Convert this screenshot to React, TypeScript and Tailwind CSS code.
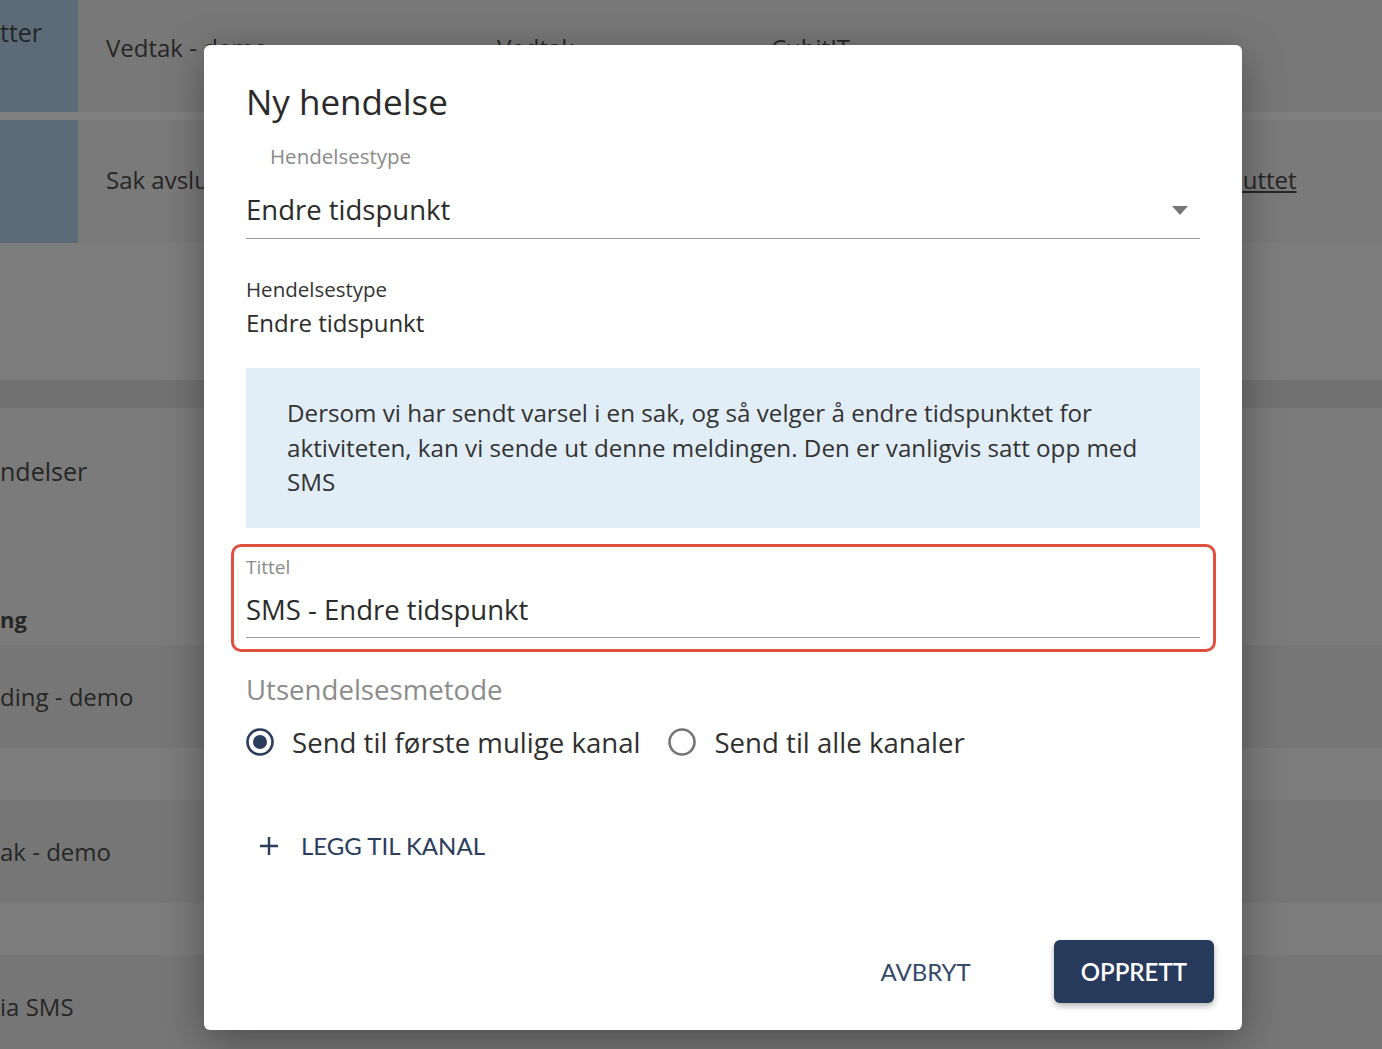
export default function App() {
  const rows = [
    { text: 'ding - demo', dark: true, h: 'h-[103px]' },
    { text: '', dark: false, h: 'h-[52px]' },
    { text: 'ak - demo', dark: true, h: 'h-[103px]' },
    { text: '', dark: false, h: 'h-[52px]' },
    { text: 'ia SMS', dark: true, h: 'h-[103px]' },
  ];

  return (
    <div className="relative w-[1382px] h-[1049px] overflow-hidden bg-[#7a7a7a] font-['Open_Sans',sans-serif] text-[#262626]">
      {/* page behind the dialog */}
      <div className="flex flex-col">
        <div className="flex h-[112px] bg-[#787878]">
          <div className="w-[78px] shrink-0 bg-[#5c6b77] pt-[14px] text-[25px] leading-[36px]">tter</div>
          <div className="flex pt-[30px] text-[24px] leading-[36px]">
            <span className="ml-[28px] w-[391px]">Vedtak - demo</span>
            <span className="w-[274px]">Vedtak</span>
            <span>CubitIT</span>
          </div>
        </div>
        <div className="h-[8px] bg-[#808080]" />
        <div className="flex h-[123px] bg-[#7a7a7a]">
          <div className="w-[78px] shrink-0 bg-[#5c6b77]" />
          <div className="flex w-full items-center pb-[4px] text-[24px] leading-[36px]">
            <span className="ml-[28px] w-[1092px]">Sak avsluttet</span>
            <span className="underline">Avsluttet</span>
          </div>
        </div>
        <div className="h-[137px] bg-[#7d7d7d]" />
        <div className="h-[28px] bg-[#727272]" />
        <div className="flex h-[237px] flex-col bg-[#7b7b7b]">
          <div className="mt-[45px] text-[25px] leading-[36px]">ndelser</div>
          <div className="mt-[114px] text-[22px] font-bold leading-[32px]">ng</div>
        </div>
        {rows.map((r, i) => (
          <div
            key={i}
            className={`flex items-center text-[24px] leading-[36px] ${r.h} ${r.dark ? 'bg-[#767676]' : 'bg-[#7c7c7c]'}`}
          >
            {r.text}
          </div>
        ))}
      </div>

      {/* dialog */}
      <div className="absolute left-[204px] top-[45px] flex h-[985px] w-[1038px] flex-col rounded-[6px] bg-white px-[42px] shadow-[0_10px_40px_rgba(0,0,0,0.35)]">
        <h2 className="pt-[34px] text-[35px] leading-[46px] text-[#2a2a2a]">Ny hendelse</h2>

        <div className="mt-[17px] ml-[24px] text-[20.5px] leading-[28px] text-[#8a8a8a]">Hendelsestype</div>
        <div className="mt-[22px] flex items-center justify-between border-b border-[#9b9b9b] pb-[10px]">
          <span className="text-[27.5px] leading-[36px] text-[#2b2b2b]">Endre tidspunkt</span>
          <svg width="16" height="9" viewBox="0 0 16 9" className="mr-[12px]">
            <path d="M0 0 L16 0 L8 9 Z" fill="#767676" />
          </svg>
        </div>

        <div className="mt-[36px] text-[20.5px] leading-[28px] text-[#333]">Hendelsestype</div>
        <div className="mt-[4px] text-[24px] leading-[32px] text-[#2b2b2b]">Endre tidspunkt</div>

        <div className="mt-[29px] bg-[#e1eef8] px-[41px] py-[28px] text-[24.2px] leading-[34.5px] text-[#333]">
          Dersom vi har sendt varsel i en sak, og så velger å endre tidspunktet for aktiviteten, kan vi sende ut denne meldingen. Den er vanligvis satt opp med SMS
        </div>

        <div className="mt-[16px] -ml-[15px] -mr-[16px] rounded-[10px] border-[3px] border-[#e0503f] pl-[12px] pr-[13px] pt-[7px] pb-[11px]">
          <div className="text-[19px] leading-[26px] text-[#8a8a8a]">Tittel</div>
          <div className="mt-[12px] border-b border-[#9b9b9b] pb-[9px] text-[27.5px] leading-[36px] text-[#2b2b2b]">
            SMS - Endre tidspunkt
          </div>
        </div>

        <div className="mt-[19px] text-[27.6px] leading-[36px] text-[#8c8c8c]">Utsendelsesmetode</div>

        <div className="mt-[17px] flex items-center text-[27.6px] leading-[36px] text-[#2f2f2f]">
          <svg width="28" height="28" viewBox="0 0 28 28">
            <circle cx="14" cy="14" r="12.5" fill="none" stroke="#2a3b5b" strokeWidth="2.6" />
            <circle cx="14" cy="14" r="7" fill="#2a3b5b" />
          </svg>
          <span className="ml-[18px]">Send til første mulige kanal</span>
          <svg width="28" height="28" viewBox="0 0 28 28" className="ml-[28px]">
            <circle cx="14" cy="14" r="12.5" fill="none" stroke="#757575" strokeWidth="2.6" />
          </svg>
          <span className="ml-[18px]">Send til alle kanaler</span>
        </div>

        <div className="mt-[68px] flex items-center font-['Lato',sans-serif] text-[24px] leading-[36px] text-[#2b3d5c]">
          <svg width="20" height="20" viewBox="0 0 20 20" className="ml-[13px]">
            <path d="M10 1 V19 M1 10 H19" stroke="#2b3d5c" strokeWidth="2.4" />
          </svg>
          <span className="ml-[22px]">LEGG TIL KANAL</span>
        </div>

        <div className="mt-auto -mr-[14px] flex items-center justify-end gap-[83px] pb-[27px] font-['Lato',sans-serif] text-[24px]">
          <button className="leading-[63px] text-[#35496b]">AVBRYT</button>
          <button className="h-[63px] rounded-[6px] bg-[#283a5b] px-[27px] font-semibold text-white shadow-[0_3px_6px_rgba(0,0,0,0.3)]">
            OPPRETT
          </button>
        </div>
      </div>
    </div>
  );
}
